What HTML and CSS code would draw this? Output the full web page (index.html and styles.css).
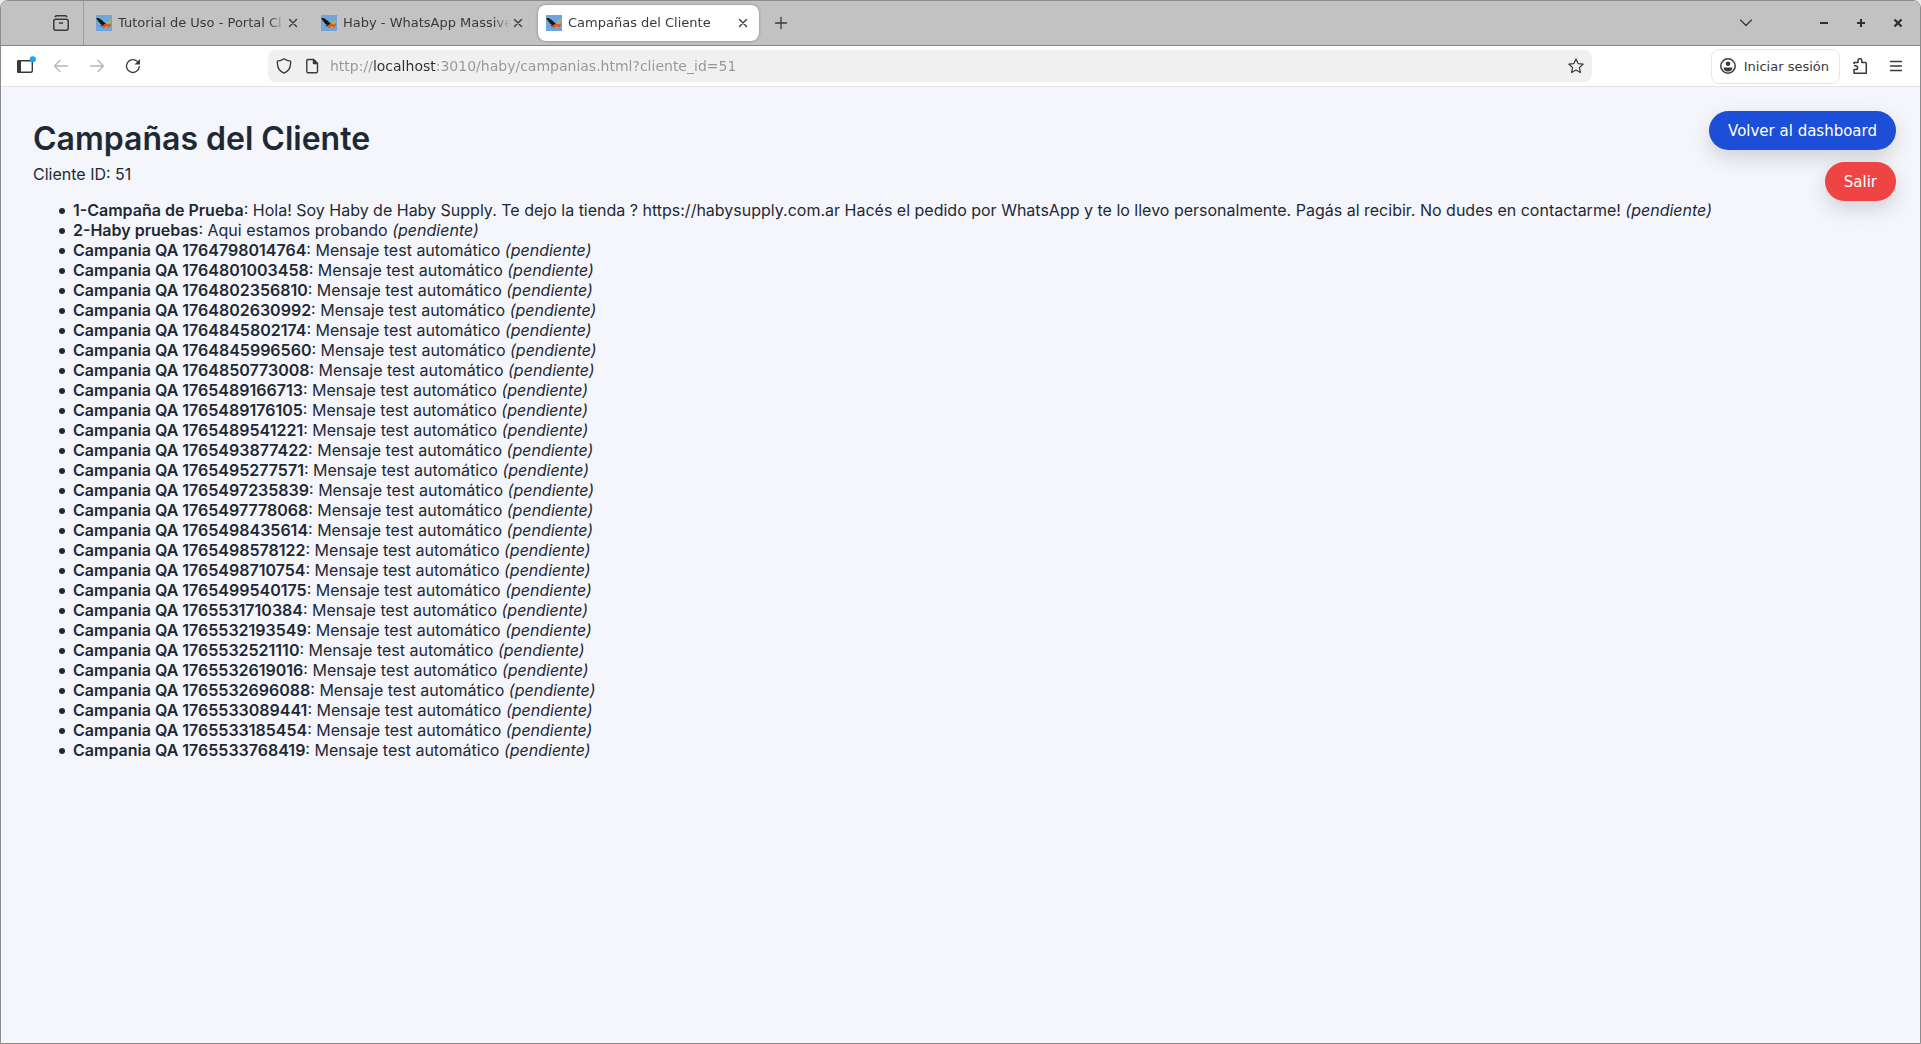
FILE: index.html
```html
<!DOCTYPE html>
<html lang="es">
<head>
<meta charset="UTF-8" />
<meta name="viewport" content="width=device-width, initial-scale=1" />
<title>Campañas del Cliente</title>
<link rel="stylesheet" href="styles.css">
</head>
<body>

<svg class="defs" width="0" height="0">
  <symbol id="bird" viewBox="0 0 16 16">
    <rect width="16" height="16" fill="#70a5dc"/>
    <path d="M0 3.200L2.500 3l3.500 2.200L9.500 8.500 11 9.500 8 11 4.500 9z" fill="#19140f"/>
    <path d="M6.500 10.500l2.500-1.700 3 .6 2.500-1.200.3 2L13.300 12.300 9.500 13.300 7 12.500z" fill="#d9531d"/>
    <path d="M10.500 8l1.500-2.500.5 1.300L14.800 3.500v4L12.500 9.200z" fill="#b5b83c"/>
    <path d="M4 10l3.500.5L6 11.800z" fill="#5a3018"/>
    <path d="M8.500 12l4-1-1 1.800-2 .5z" fill="#f59a24"/>
  </symbol>
  <symbol id="cross" viewBox="0 0 16 16">
    <path d="M4.500 4.500l7 7M11.500 4.500l-7 7" stroke="currentColor" stroke-width="1.400" stroke-linecap="round" fill="none"/>
  </symbol>
</svg>

<div class="window">
  <header class="tabbar">
    <button class="icon-btn btn-view" aria-label="Vista">
      <svg width="18" height="18" viewBox="0 0 18 18" fill="none" stroke="currentColor" stroke-width="1.500" stroke-linecap="round">
        <path d="M3.200 2.600C3.600 1.900 4.200 1.700 5 1.700h8c.8 0 1.400.2 1.800.9"/>
        <rect x="1.800" y="5.200" width="14.400" height="11" rx="2"/>
        <path d="M7.500 9h3"/>
      </svg>
    </button>
    <div class="tabs">
      <div class="tab">
        <svg class="favicon"><use href="#bird"/></svg>
        <span class="tab-title">Tutorial de Uso - Portal Cl</span>
        <button class="tab-close" aria-label="Cerrar"><svg><use href="#cross"/></svg></button>
      </div>
      <div class="tab">
        <svg class="favicon"><use href="#bird"/></svg>
        <span class="tab-title">Haby - WhatsApp Massive</span>
        <button class="tab-close" aria-label="Cerrar"><svg><use href="#cross"/></svg></button>
      </div>
      <div class="tab active">
        <svg class="favicon"><use href="#bird"/></svg>
        <span class="tab-title">Campañas del Cliente</span>
        <button class="tab-close" aria-label="Cerrar"><svg><use href="#cross"/></svg></button>
      </div>
    </div>
    <button class="icon-btn" aria-label="Nueva pestaña">
      <svg width="16" height="16" viewBox="0 0 16 16" fill="none" stroke="currentColor" stroke-width="1.300" stroke-linecap="round"><path d="M8 2.500v11M2.500 8h11"/></svg>
    </button>
    <button class="icon-btn btn-list" aria-label="Lista de pestañas">
      <svg width="16" height="16" viewBox="0 0 16 16" fill="none" stroke="currentColor" stroke-width="1.300" stroke-linecap="round" stroke-linejoin="round"><path d="M2.500 5l5.500 5.500L13.500 5"/></svg>
    </button>
    <div class="win-buttons">
      <button class="icon-btn" aria-label="Minimizar"><svg width="16" height="16" viewBox="0 0 16 16"><path d="M4 8h8" stroke="#2e2e2e" stroke-width="2"/></svg></button>
      <button class="icon-btn" aria-label="Maximizar"><svg width="16" height="16" viewBox="0 0 16 16"><path d="M4 8h8M8 4v8" stroke="#2e2e2e" stroke-width="2"/></svg></button>
      <button class="icon-btn" aria-label="Cerrar ventana"><svg width="16" height="16" viewBox="0 0 16 16"><path d="M4.500 4.500l7 7M11.500 4.500l-7 7" stroke="#2e2e2e" stroke-width="2.200"/></svg></button>
    </div>
  </header>

  <nav class="toolbar">
    <div class="nav-buttons">
      <button class="icon-btn" aria-label="Barra lateral">
        <svg class="sidebar-icon" width="20" height="20" viewBox="0 0 20 20">
          <rect x="2.700" y="4.700" width="14.600" height="11.600" rx="1.500" fill="none" stroke="#3a3a3a" stroke-width="1.400"/>
          <path d="M3.500 4H6v13H3.500A1.500 1.500 0 0 1 2 15.500v-10A1.500 1.500 0 0 1 3.500 4z" fill="#3a3a3a"/>
          <circle cx="17.800" cy="3.200" r="3" fill="#0aa9f5"/>
        </svg>
      </button>
      <button class="icon-btn" aria-label="Atrás" disabled>
        <svg width="16" height="16" viewBox="0 0 16 16" fill="none" stroke="currentColor" stroke-width="1.300" stroke-linecap="round" stroke-linejoin="round"><path d="M14.500 8h-13M7 2.500L1.500 8 7 13.500"/></svg>
      </button>
      <button class="icon-btn" aria-label="Adelante" disabled>
        <svg width="16" height="16" viewBox="0 0 16 16" fill="none" stroke="currentColor" stroke-width="1.300" stroke-linecap="round" stroke-linejoin="round"><path d="M1.500 8h13M9 2.500L14.500 8 9 13.500"/></svg>
      </button>
      <button class="icon-btn" aria-label="Recargar">
        <svg width="16" height="16" viewBox="0 0 16 16"><path d="M14.300 8.500A6.400 6.400 0 1 1 12.300 3.400" fill="none" stroke="currentColor" stroke-width="1.300" stroke-linecap="round"/><path d="M15 1v5.500H9.500z" fill="currentColor"/></svg>
      </button>
    </div>

    <div class="urlbar">
      <button class="url-btn" aria-label="Protección">
        <svg width="16" height="16" viewBox="0 0 16 16" fill="none" stroke="currentColor" stroke-width="1.300" stroke-linejoin="round"><path d="M8 .8c2 1.500 4 2.200 6.600 2.400.4 5.500-1.800 10-6.600 12C3.200 13.200 1 8.700 1.400 3.200 4 3 6 2.300 8 .8z"/></svg>
      </button>
      <button class="url-btn" aria-label="Información del sitio">
        <svg width="16" height="16" viewBox="0 0 16 16" fill="none" stroke="currentColor" stroke-width="1.400" stroke-linejoin="round"><path d="M4 1.500h5.500L13.500 5.500v8a1.200 1.200 0 0 1-1.200 1.200H4a1.200 1.200 0 0 1-1.200-1.200V2.700A1.200 1.200 0 0 1 4 1.500z"/><path d="M9.500 1.500v4h4z" fill="currentColor"/></svg>
      </button>
      <input class="url" type="text" aria-label="Dirección" value="http://localhost:3010/haby/campanias.html?cliente_id=51" />
      <button class="url-btn" aria-label="Marcador">
        <svg width="16" height="16" viewBox="0 0 16 16" fill="none" stroke="currentColor" stroke-width="1.200" stroke-linejoin="round"><path d="M8 1l2.100 4.600 5 .6-3.700 3.400 1 5L8 12.100l-4.400 2.500 1-5L.9 6.200l5-.6z"/></svg>
      </button>
    </div>

    <button class="btn-login">
      <svg width="16" height="16" viewBox="0 0 16 16"><circle cx="8" cy="8" r="7.200" fill="none" stroke="currentColor" stroke-width="1.500"/><circle cx="8" cy="5.800" r="2.300" fill="currentColor"/><path d="M3.500 9.500h9c0 2.500-2 4-4.500 4s-4.500-1.500-4.500-4z" fill="currentColor"/></svg>
      Iniciar sesión
    </button>
    <button class="icon-btn" aria-label="Extensiones">
      <svg width="16" height="16" viewBox="0 0 16 16" fill="none" stroke="currentColor" stroke-width="1.500" stroke-linejoin="round"><path d="M2 6V4.500h4V2.600a1.900 1.900 0 0 1 3.800 0v1.900h3.700a.8.8 0 0 1 .8.800v9.900H2v-3.700h1.700a1.800 1.800 0 0 0 0-3.700H2"/></svg>
    </button>
    <button class="icon-btn" aria-label="Menú">
      <svg width="16" height="16" viewBox="0 0 16 16" fill="none" stroke="currentColor" stroke-width="1.300" stroke-linecap="round"><path d="M2.500 3.500h11M2.500 8h11M2.500 12.500h11"/></svg>
    </button>
  </nav>

  <main>
    <h1>Campañas del Cliente</h1>
    <p class="cliente">Cliente ID: 51</p>
    <ul id="listaCampanias">
      <li><strong>1-Campaña de Prueba</strong>: Hola! Soy Haby de Haby Supply. Te dejo la tienda ? https://habysupply.com.ar Hacés el pedido por WhatsApp y te lo llevo personalmente. Pagás al recibir. No dudes en contactarme! <em>(pendiente)</em></li>
      <li><strong>2-Haby pruebas</strong>: Aqui estamos probando <em>(pendiente)</em></li>
      <li><strong>Campania QA 1764798014764</strong>: Mensaje test automático <em>(pendiente)</em></li>
      <li><strong>Campania QA 1764801003458</strong>: Mensaje test automático <em>(pendiente)</em></li>
      <li><strong>Campania QA 1764802356810</strong>: Mensaje test automático <em>(pendiente)</em></li>
      <li><strong>Campania QA 1764802630992</strong>: Mensaje test automático <em>(pendiente)</em></li>
      <li><strong>Campania QA 1764845802174</strong>: Mensaje test automático <em>(pendiente)</em></li>
      <li><strong>Campania QA 1764845996560</strong>: Mensaje test automático <em>(pendiente)</em></li>
      <li><strong>Campania QA 1764850773008</strong>: Mensaje test automático <em>(pendiente)</em></li>
      <li><strong>Campania QA 1765489166713</strong>: Mensaje test automático <em>(pendiente)</em></li>
      <li><strong>Campania QA 1765489176105</strong>: Mensaje test automático <em>(pendiente)</em></li>
      <li><strong>Campania QA 1765489541221</strong>: Mensaje test automático <em>(pendiente)</em></li>
      <li><strong>Campania QA 1765493877422</strong>: Mensaje test automático <em>(pendiente)</em></li>
      <li><strong>Campania QA 1765495277571</strong>: Mensaje test automático <em>(pendiente)</em></li>
      <li><strong>Campania QA 1765497235839</strong>: Mensaje test automático <em>(pendiente)</em></li>
      <li><strong>Campania QA 1765497778068</strong>: Mensaje test automático <em>(pendiente)</em></li>
      <li><strong>Campania QA 1765498435614</strong>: Mensaje test automático <em>(pendiente)</em></li>
      <li><strong>Campania QA 1765498578122</strong>: Mensaje test automático <em>(pendiente)</em></li>
      <li><strong>Campania QA 1765498710754</strong>: Mensaje test automático <em>(pendiente)</em></li>
      <li><strong>Campania QA 1765499540175</strong>: Mensaje test automático <em>(pendiente)</em></li>
      <li><strong>Campania QA 1765531710384</strong>: Mensaje test automático <em>(pendiente)</em></li>
      <li><strong>Campania QA 1765532193549</strong>: Mensaje test automático <em>(pendiente)</em></li>
      <li><strong>Campania QA 1765532521110</strong>: Mensaje test automático <em>(pendiente)</em></li>
      <li><strong>Campania QA 1765532619016</strong>: Mensaje test automático <em>(pendiente)</em></li>
      <li><strong>Campania QA 1765532696088</strong>: Mensaje test automático <em>(pendiente)</em></li>
      <li><strong>Campania QA 1765533089441</strong>: Mensaje test automático <em>(pendiente)</em></li>
      <li><strong>Campania QA 1765533185454</strong>: Mensaje test automático <em>(pendiente)</em></li>
      <li><strong>Campania QA 1765533768419</strong>: Mensaje test automático <em>(pendiente)</em></li>
    </ul>

    <div class="acciones">
      <button class="btn-accion btn-volver">Volver al dashboard</button>
      <button class="btn-accion btn-salir">Salir</button>
    </div>
  </main>
</div>

</body>
</html>
```

FILE: styles.css
```css
* {
  box-sizing: border-box;
}
body {
  margin: 0;
  background: #e9e9e9;
  color: #1f2933;
  font-family: Inter, "Liberation Sans", sans-serif;
  font-size: 16px;
  line-height: 20px;
}
button, input {
  font-family: "DejaVu Sans", sans-serif;
  border: none;
  padding: 0;
  margin: 0;
  background: none;
  color: inherit;
}
button {
  cursor: pointer;
}
.defs {
  position: absolute;
}
.window {
  min-height: 100vh;
  display: flex; flex-direction: column;
  border: 1px solid #8c8c8c;
  border-radius: 8px 8px 0 0;
  background: #f4f6fc;
  overflow: hidden;
}

/* pestañas */
.tabbar {
  display: flex; align-items: center;
  height: 45px;
  background: #c2c2c2;
  border-bottom: 1px solid #858585;
  color: #3a3a3a;
  font-family: "DejaVu Sans", sans-serif;
  font-size: 13px;
}
.icon-btn {
  width: 36px; height: 36px;
  display: flex; align-items: center; justify-content: center;
  flex: none;
}
.btn-view {
  width: 83px; height: 44px;
  padding-left: 38px;
  border-right: 1px solid #9c9c9c;
}
.tabs {
  display: flex;
  gap: 4px;
  padding: 0 4px;
}
.tab {
  width: 221px; height: 36px;
  display: flex; align-items: center;
  padding: 0 8px;
  border-radius: 8px;
}
.tab.active {
  background: #fff;
  box-shadow: 0 0 3px rgba(0,0,0,0.35);
}
.favicon {
  width: 16px; height: 16px;
  margin-right: 6px;
  flex: none;
}
.tab-title {
  flex: 1;
  overflow: hidden;
  white-space: nowrap;
  -webkit-mask-image: linear-gradient(to left, transparent, #000 16px);
  mask-image: linear-gradient(to left, transparent, #000 16px);
}
.tab-close {
  width: 16px; height: 16px;
  flex: none;
}
.tab-close svg {
  display: block;
  width: 16px; height: 16px;
}
.btn-list {
  margin-left: auto;
}
.win-buttons {
  display: flex;
  gap: 1px;
  padding: 0 4px 0 42px;
}

/* barra de navegación */
.toolbar {
  display: flex; align-items: center;
  height: 41px;
  padding: 0 6px;
  background: #fff;
  border-bottom: 1px solid #e3e3e6;
  color: #3a3a3a;
}
.nav-buttons {
  display: flex;
}
.sidebar-icon {
  overflow: visible;
}
.icon-btn:disabled {
  color: #b4b4b4;
}
.urlbar {
  flex: 1;
  display: flex; align-items: center;
  height: 32px;
  margin: 0 119px 0 117px;
  padding: 0 2px;
  background: #f0f0f0;
  border-radius: 8px;
}
.url-btn {
  width: 28px; height: 28px;
  display: flex; align-items: center; justify-content: center;
  flex: none;
}
.url {
  flex: 1;
  min-width: 0;
  height: 28px;
  margin-left: 4px;
  font-size: 14px;
  outline: none;
  /* el dominio va más oscuro que el resto */
  background: linear-gradient(to right, #969696 43px, #2e2e2e 43px, #2e2e2e 106px, #969696 106px);
  -webkit-background-clip: text;
  background-clip: text;
  -webkit-text-fill-color: transparent;
}
.btn-login {
  display: flex; align-items: center;
  gap: 8px;
  height: 35px;
  margin-right: 2px;
  padding: 0 10px 0 8px;
  border: 1px solid #e6e6e6;
  border-radius: 8px;
  font-size: 13px;
}

/* contenido */
main {
  flex: 1;
  position: relative;
  padding: 32px;
}
h1 {
  margin: 0 0 5px;
  font-size: 32px;
  font-weight: 600;
  line-height: 40px;
}
.cliente {
  margin: 0 0 16px;
}
ul {
  margin: 0;
  padding-left: 40px;
  list-style: none;
}
li::before {
  content: "";
  display: inline-block;
  width: 6px; height: 6px;
  margin: 0 8px 0 -14px;
  border-radius: 50%;
  background: #1f2933;
  vertical-align: 2px;
}
strong {
  font-weight: 600;
}
.acciones {
  position: absolute;
  top: 24px; right: 24px;
  display: flex; flex-direction: column; align-items: flex-end;
  gap: 12px;
}
.btn-accion {
  height: 39px;
  padding: 0 19px;
  border-radius: 20px;
  color: #fff;
  font-size: 15px;
  box-shadow: 0 8px 20px rgba(0,0,0,0.15);
}
.btn-volver {
  background: #1d4ed8;
}
.btn-salir {
  background: #ef4444;
}
```
